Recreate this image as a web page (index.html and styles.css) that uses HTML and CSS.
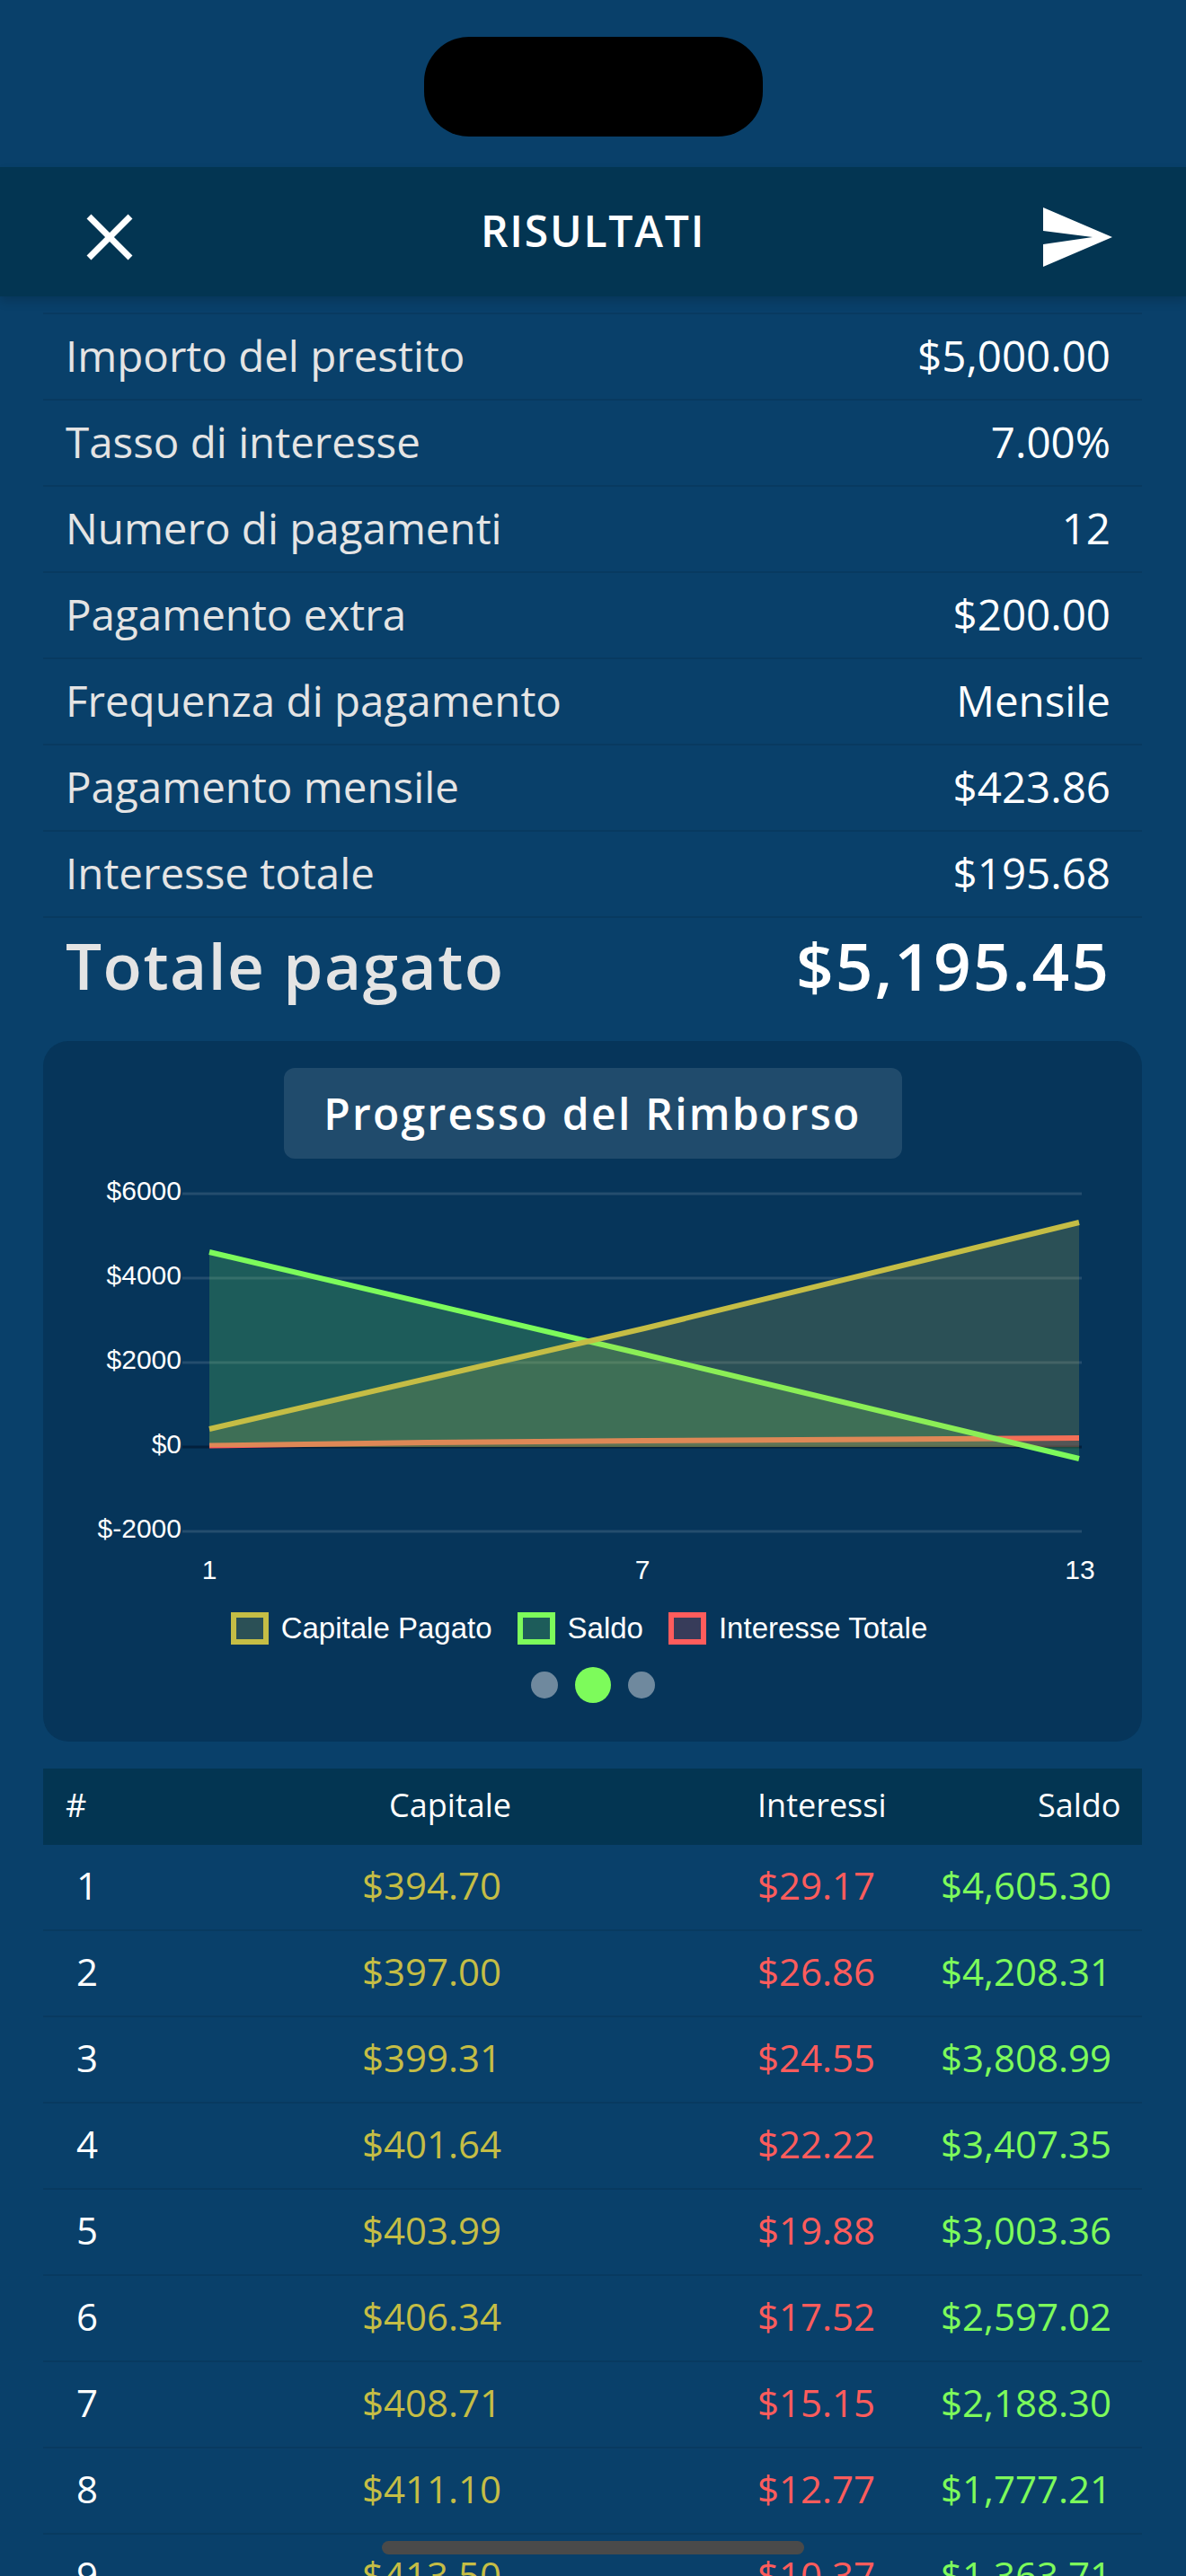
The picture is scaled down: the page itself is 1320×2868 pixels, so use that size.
FILE: index.html
```html
<!DOCTYPE html>
<html lang="en">
  <head>
    <meta charset="UTF-8" />
    <meta name="viewport" content="width=device-width, initial-scale=1.0" />
    <title>Risultati</title>
    <link rel="stylesheet" href="styles.css">
  </head>
  <body>
    <div class="screen">
      <div class="status-bar"><div class="island"></div></div>

      <div class="top-bar">
        <svg class="close-icon" viewBox="0 0 52 52" width="52" height="52">
          <path d="M3 3 L49 49 M49 3 L3 49" />
        </svg>
        <h1>RISULTATI</h1>
        <svg class="send-icon" viewBox="0 0 77 66" width="77" height="66">
          <path d="M0 0 L77 33 L0 66 L0 41 L55 33 L0 26 Z" />
        </svg>
      </div>

      <div class="summary">
        <div class="summary-row"><span>Importo del prestito</span><span class="value">$5,000.00</span></div>
        <div class="summary-row"><span>Tasso di interesse</span><span class="value">7.00%</span></div>
        <div class="summary-row"><span>Numero di pagamenti</span><span class="value">12</span></div>
        <div class="summary-row"><span>Pagamento extra</span><span class="value">$200.00</span></div>
        <div class="summary-row"><span>Frequenza di pagamento</span><span class="value">Mensile</span></div>
        <div class="summary-row"><span>Pagamento mensile</span><span class="value">$423.86</span></div>
        <div class="summary-row"><span>Interesse totale</span><span class="value">$195.68</span></div>
        <div class="total-row"><span>Totale pagato</span><span class="value">$5,195.45</span></div>
      </div>

      <div class="chart-card">
        <div class="chart-title">Progresso del Rimborso</div>
        <svg class="chart" viewBox="0 0 1223 486" width="1223" height="486">
          <g class="grid">
            <line x1="155" y1="39" x2="1156" y2="39" />
            <line x1="155" y1="133" x2="1156" y2="133" />
            <line x1="155" y1="227" x2="1156" y2="227" />
            <line x1="155" y1="415" x2="1156" y2="415" />
          </g>
          <line class="zero-line" x1="155" y1="321" x2="1156" y2="321" />

          <!-- last series is painted first, so the fills above tint it -->
          <polygon class="fill-red" points="185,321 185,319.6 427,316 669,314 1153,311 1153,321" />
          <polyline class="line-red" points="185,319.6 427,316 669,314 1153,311" />
          <polygon class="fill-green" points="185,321 185,104 669,218 1153,334 1153,321" />
          <polyline class="line-green" points="185,104 669,218 1153,334" />
          <polygon class="fill-yellow" points="185,321 185,301 669,189 1153,71 1153,321" />
          <polyline class="line-yellow" points="185,301 669,189 1153,71" />

          <g class="y-labels">
            <text x="154" y="46">$6000</text>
            <text x="154" y="140">$4000</text>
            <text x="154" y="234">$2000</text>
            <text x="154" y="328">$0</text>
            <text x="154" y="422">$-2000</text>
          </g>
          <g class="x-labels">
            <text x="185" y="468">1</text>
            <text x="667" y="468">7</text>
            <text x="1154" y="468">13</text>
          </g>
        </svg>

        <div class="legend">
          <div class="legend-item"><span class="swatch swatch-yellow"></span>Capitale Pagato</div>
          <div class="legend-item"><span class="swatch swatch-green"></span>Saldo</div>
          <div class="legend-item"><span class="swatch swatch-red"></span>Interesse Totale</div>
        </div>

        <div class="dots">
          <span class="dot"></span>
          <span class="dot active"></span>
          <span class="dot"></span>
        </div>
      </div>

      <div class="table-head">
        <span>#</span><span>Capitale</span><span>Interessi</span><span>Saldo</span>
      </div>
      <div class="table-row"><span>1</span><span class="yellow">$394.70</span><span class="red">$29.17</span><span class="green">$4,605.30</span></div>
      <div class="table-row"><span>2</span><span class="yellow">$397.00</span><span class="red">$26.86</span><span class="green">$4,208.31</span></div>
      <div class="table-row"><span>3</span><span class="yellow">$399.31</span><span class="red">$24.55</span><span class="green">$3,808.99</span></div>
      <div class="table-row"><span>4</span><span class="yellow">$401.64</span><span class="red">$22.22</span><span class="green">$3,407.35</span></div>
      <div class="table-row"><span>5</span><span class="yellow">$403.99</span><span class="red">$19.88</span><span class="green">$3,003.36</span></div>
      <div class="table-row"><span>6</span><span class="yellow">$406.34</span><span class="red">$17.52</span><span class="green">$2,597.02</span></div>
      <div class="table-row"><span>7</span><span class="yellow">$408.71</span><span class="red">$15.15</span><span class="green">$2,188.30</span></div>
      <div class="table-row"><span>8</span><span class="yellow">$411.10</span><span class="red">$12.77</span><span class="green">$1,777.21</span></div>
      <div class="table-row"><span>9</span><span class="yellow">$413.50</span><span class="red">$10.37</span><span class="green">$1,363.71</span></div>

      <div class="home-bar"></div>
    </div>
  </body>
</html>
```

FILE: styles.css
```css
html,
body {
  margin: 0;
  padding: 0;
}
body {
  font-family: "Open Sans", sans-serif;
  background-color: #09406a;
  color: #fff;
}
.screen {
  position: relative;
  width: 1320px;
  height: 2868px;
  overflow: hidden;
  background-color: #09406a;
}
.status-bar {
  height: 186px;
  display: flex;
  justify-content: center;
  padding-top: 41px;
  box-sizing: border-box;
}
.island {
  width: 377px;
  height: 111px;
  background-color: #000;
  border-radius: 50px;
}
.top-bar {
  position: relative;
  height: 144px;
  padding: 0 82px 0 96px;
  box-sizing: border-box;
  display: flex;
  align-items: center;
  justify-content: space-between;
  background-color: #033552;
  box-shadow: 0 6px 10px rgba(0, 0, 0, 0.14);
}
.top-bar h1 {
  position: absolute;
  left: 0;
  right: 0;
  top: 43px;
  margin: 0;
  text-align: center;
  font-size: 48px;
  line-height: 56px;
  font-weight: 600;
  letter-spacing: 1.8px;
}
.close-icon {
  margin-top: 12px;
}
.close-icon path {
  fill: none;
  stroke: #fff;
  stroke-width: 7;
}
.send-icon {
  margin-top: 12px;
}
.send-icon path {
  fill: #fff;
}

/* summary list */
.summary {
  margin: 18px 49px 0 48px;
  border-top: 2px solid #083a60;
}
.summary-row {
  height: 96px;
  padding: 0 35px 3px 25px;
  box-sizing: border-box;
  display: flex;
  align-items: center;
  justify-content: space-between;
  border-bottom: 2px solid #083a60;
  font-size: 47.5px;
  color: #e4e4e4;
}
.value {
  color: #fff;
}
.total-row {
  height: 108px;
  padding: 0 35px 4px 25px;
  box-sizing: border-box;
  display: flex;
  align-items: center;
  justify-content: space-between;
  font-size: 71px;
  font-weight: 600;
  letter-spacing: 1.5px;
  color: #e4e4e4;
}
.total-row .value {
  font-size: 73px;
  letter-spacing: 2px;
}

/* chart */
.chart-card {
  margin: 29px 49px 30px 48px;
  height: 780px;
  padding-top: 30px;
  box-sizing: border-box;
  background-color: #06355a;
  border-radius: 28px;
}
.chart-title {
  width: 688px;
  height: 101px;
  margin: 0 auto;
  display: flex;
  align-items: center;
  justify-content: center;
  background-color: #204b6c;
  border-radius: 12px;
  font-size: 48px;
  font-weight: 600;
  letter-spacing: 2.25px;
}
.chart {
  display: block;
}
.grid line {
  stroke: rgba(255, 255, 255, 0.12);
  stroke-width: 3;
}
.zero-line {
  stroke: #03203c;
  stroke-width: 3;
}
.fill-green {
  fill: rgba(125, 251, 91, 0.2);
}
.fill-yellow {
  fill: rgba(197, 189, 69, 0.2);
}
.fill-red {
  fill: rgba(255, 92, 92, 0.2);
}
.line-green,
.line-yellow,
.line-red {
  fill: none;
  stroke-width: 6;
}
.line-green {
  stroke: #7dfb5b;
}
.line-yellow {
  stroke: #c5bd45;
}
.line-red {
  stroke: #ff5c5c;
}
.chart text {
  font-family: "Liberation Sans", Arial, sans-serif;
  font-size: 30px;
  fill: #fff;
}
.y-labels text {
  text-anchor: end;
}
.x-labels text {
  text-anchor: middle;
}
.legend {
  margin-top: 19px;
  padding-right: 30px;
  display: flex;
  justify-content: center;
  gap: 28px;
  font-family: "Liberation Sans", Arial, sans-serif;
  font-size: 33px;
  line-height: 36px;
}
.legend-item {
  display: flex;
  align-items: center;
  gap: 14px;
}
.swatch {
  width: 42px;
  height: 36px;
  box-sizing: border-box;
  border: 6px solid;
}
.swatch-yellow {
  border-color: #c5bd45;
  background-color: rgba(197, 189, 69, 0.2);
}
.swatch-green {
  border-color: #7dfb5b;
  background-color: rgba(125, 251, 91, 0.2);
}
.swatch-red {
  border-color: #ff5c5c;
  background-color: rgba(255, 92, 92, 0.2);
}
.dots {
  margin-top: 25px;
  display: flex;
  justify-content: center;
  align-items: center;
  gap: 19px;
}
.dot {
  width: 30px;
  height: 30px;
  border-radius: 50%;
  background-color: #6f899e;
}
.dot.active {
  width: 40px;
  height: 40px;
  background-color: #7dfb5b;
}

/* schedule table */
.table-head {
  margin: 0 49px 0 48px;
  height: 85px;
  padding: 0 0 4px 25px;
  box-sizing: border-box;
  display: grid;
  grid-template-columns: 360px 410px 312px 1fr;
  align-items: center;
  background-color: #033552;
  font-size: 36px;
}
.table-row {
  margin: 0 49px 0 48px;
  height: 96px;
  padding: 0 0 5px 37px;
  box-sizing: border-box;
  display: grid;
  grid-template-columns: 318px 440px 204px 1fr;
  align-items: center;
  border-bottom: 2px solid #083a60;
  font-size: 42px;
}
.yellow {
  color: #c5bd45;
}
.red {
  color: #ff5c5c;
}
.green {
  color: #7dfb5b;
}
.home-bar {
  position: absolute;
  left: 425px;
  top: 2829px;
  width: 470px;
  height: 15px;
  background-color: #4a4a4a;
  border-radius: 8px;
}
```
